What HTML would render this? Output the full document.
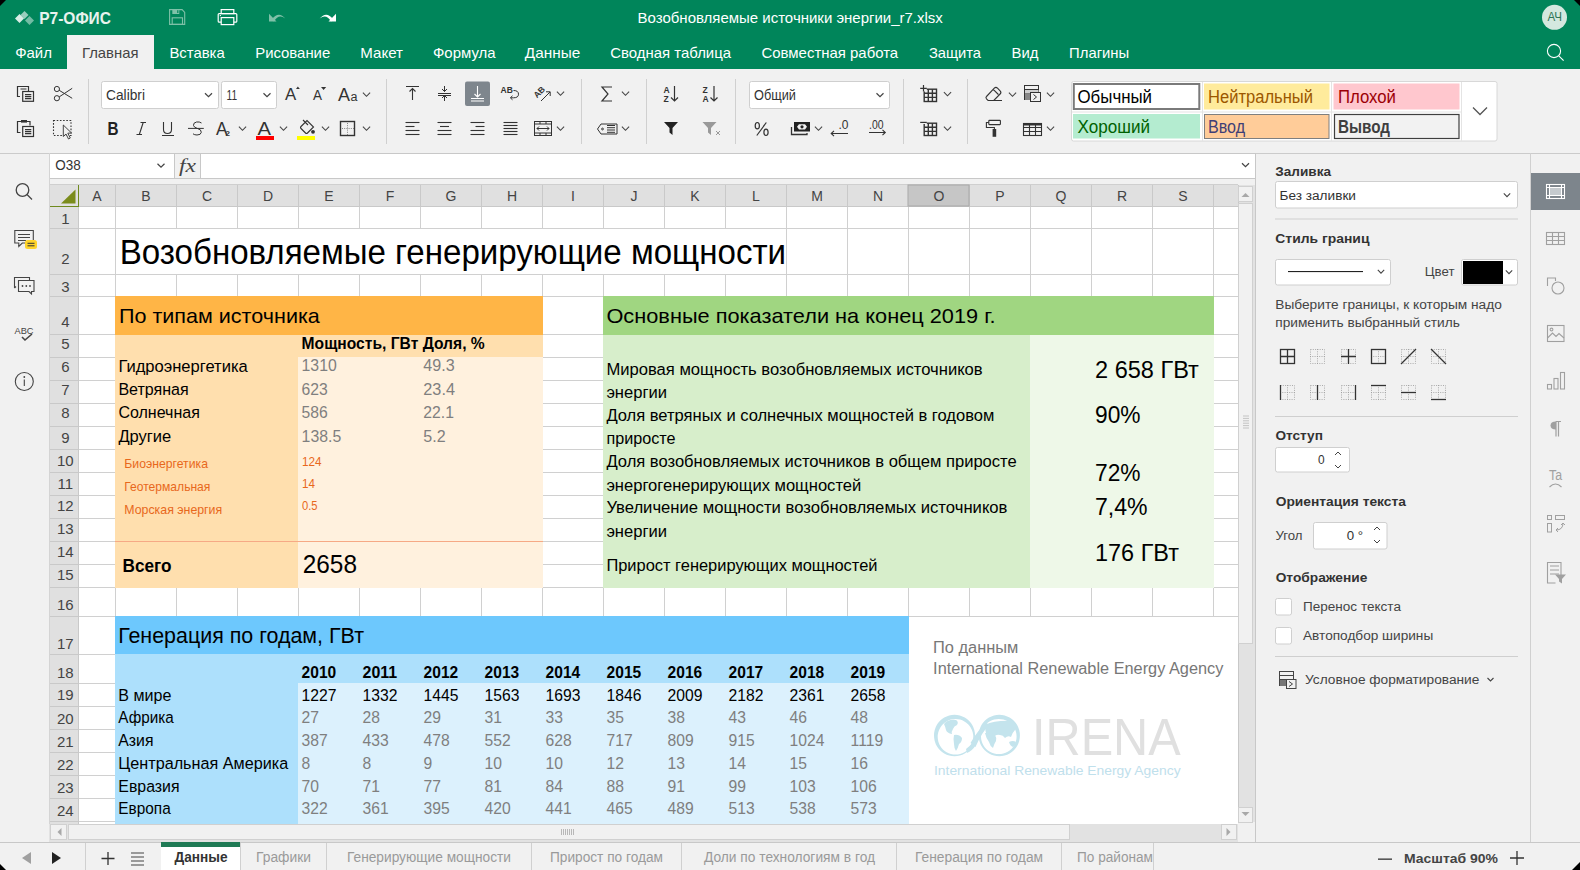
<!DOCTYPE html>
<html><head><meta charset="utf-8"><style>
html,body{margin:0;padding:0;width:1580px;height:870px;overflow:hidden;background:#f1f1f1;}
body{position:relative;font-family:"Liberation Sans",sans-serif;}
.d div{position:absolute;}
svg{position:absolute;left:0;top:0;}
svg text{font-family:"Liberation Sans",sans-serif;white-space:pre;}
</style></head><body><div class="d">
<div style="left:0px;top:0px;width:1580px;height:69px;background:#00855a;"></div>
<div style="left:67px;top:35px;width:87px;height:34px;background:#f1f1f1;"></div>
<div style="left:0px;top:69px;width:1580px;height:84px;background:#f1f1f1;"></div>
<div style="left:0px;top:153px;width:1580px;height:32px;background:#f1f1f1;"></div>
<div style="left:50px;top:185px;width:1188px;height:639px;background:#fff;"></div>
<div style="left:0px;top:842px;width:1580px;height:28px;background:#f1f1f1;"></div>
<div style="left:1256px;top:153px;width:274px;height:689px;background:#f1f1f1;"></div>
<div style="left:1531px;top:173px;width:49px;height:37px;background:#7d858c;"></div>
</div>
<svg width="1580" height="870" viewBox="0 0 1580 870">
<path d="M0 0 H6 L0 6 Z" fill="#000"/>
<path d="M1580 0 H1574 L1580 6 Z" fill="#000"/>
<path d="M1580 870 H1572 L1580 862 Z" fill="#000"/>
<path d="M0 870 H6 L0 864 Z" fill="#000"/>
<g fill="#fff"><path d="M19.5 14 l4.5 4.5 -4.5 4.5 -4.5 -4.5z" opacity="0.85"/><path d="M24.5 11 l4 4 -4 4 -4 -4z" opacity="0.6"/><path d="M29.5 16 l4.5 4.5 -4.5 4.5 -4.5 -4.5z" opacity="0.45"/></g>
<text x="39.20" y="23.7" font-size="17" fill="#e8f3ee" font-weight="bold" textLength="71.78" lengthAdjust="spacingAndGlyphs">Р7-ОФИС</text>
<g fill="none" stroke="#7fc1a8" stroke-width="1.1"><path d="M169.6 9.6 h12.5 l2.6 2.8 v12 h-15.1z"/><rect x="172.2" y="17.8" width="10.3" height="6.6"/></g><rect x="172.3" y="9.6" width="7" height="4.4" fill="#7fc1a8"/><rect x="177.2" y="10.2" width="1.2" height="2.8" fill="#00855a"/>
<g fill="none" stroke="#fff" stroke-width="1.2"><rect x="221.2" y="9.6" width="12.6" height="4"/><rect x="218.2" y="13.6" width="18.6" height="8.6" rx="1"/></g><rect x="221.2" y="17.6" width="12.6" height="7" fill="#00855a" stroke="#fff" stroke-width="1.2"/><rect x="219.8" y="15" width="1.1" height="1.1" fill="#fff"/>
<path d="M271.5 19.8 q7 -9.5 13.8 -1.2 q-6.5 -5.2 -11.3 2.8z" fill="#7fc1a8"/><path d="M269 13.8 v7.8 h7.5z" fill="#7fc1a8"/>
<path d="M333.5 19.8 q-7 -9.5 -13.8 -1.2 q6.5 -5.2 11.3 2.8z" fill="#fff"/><path d="M336 13.8 v7.8 h-7.5z" fill="#fff"/>
<text x="637.60" y="22.6" font-size="15" fill="#fff" textLength="305.21" lengthAdjust="spacingAndGlyphs">Возобновляемые источники энергии_r7.xlsx</text>
<circle cx="1554.5" cy="17.3" r="12.5" fill="#d4e8df"/>
<text x="1547.50" y="21" font-size="13" fill="#2f7456" textLength="14.52" lengthAdjust="spacingAndGlyphs">АЧ</text>
<text x="15.20" y="57.8" font-size="15" fill="#fff" textLength="36.78" lengthAdjust="spacingAndGlyphs">Файл</text>
<text x="82.00" y="57.8" font-size="15" fill="#444" textLength="56.49" lengthAdjust="spacingAndGlyphs">Главная</text>
<text x="169.40" y="57.8" font-size="15" fill="#fff" textLength="55.35" lengthAdjust="spacingAndGlyphs">Вставка</text>
<text x="255.20" y="57.8" font-size="15" fill="#fff" textLength="75.04" lengthAdjust="spacingAndGlyphs">Рисование</text>
<text x="360.30" y="57.8" font-size="15" fill="#fff" textLength="42.65" lengthAdjust="spacingAndGlyphs">Макет</text>
<text x="433.00" y="57.8" font-size="15" fill="#fff" textLength="62.63" lengthAdjust="spacingAndGlyphs">Формула</text>
<text x="524.80" y="57.8" font-size="15" fill="#fff" textLength="55.39" lengthAdjust="spacingAndGlyphs">Данные</text>
<text x="610.30" y="57.8" font-size="15" fill="#fff" textLength="120.74" lengthAdjust="spacingAndGlyphs">Сводная таблица</text>
<text x="761.50" y="57.8" font-size="15" fill="#fff" textLength="136.65" lengthAdjust="spacingAndGlyphs">Совместная работа</text>
<text x="928.90" y="57.8" font-size="15" fill="#fff" textLength="52.17" lengthAdjust="spacingAndGlyphs">Защита</text>
<text x="1011.50" y="57.8" font-size="15" fill="#fff" textLength="26.94" lengthAdjust="spacingAndGlyphs">Вид</text>
<text x="1069.10" y="57.8" font-size="15" fill="#fff" textLength="60.09" lengthAdjust="spacingAndGlyphs">Плагины</text>
<g fill="none" stroke="#fff" stroke-width="1.1"><circle cx="1554" cy="51" r="6.6"/><path d="M1558.8 55.8 l4.8 4.8"/></g>
<rect x="0" y="153" width="1580" height="1" fill="#cbcbcb"/>
<rect x="88" y="79" width="1" height="65" fill="#d0d0d0"/>
<rect x="386" y="79" width="1" height="65" fill="#d0d0d0"/>
<rect x="581" y="79" width="1" height="65" fill="#d0d0d0"/>
<rect x="646" y="79" width="1" height="65" fill="#d0d0d0"/>
<rect x="735" y="79" width="1" height="65" fill="#d0d0d0"/>
<rect x="903" y="79" width="1" height="65" fill="#d0d0d0"/>
<rect x="967" y="79" width="1" height="65" fill="#d0d0d0"/>
<rect x="101.5" y="81.5" width="117" height="27" fill="#fff" stroke="#cfcfcf" stroke-width="1" rx="2" />
<rect x="221.5" y="81.5" width="55" height="27" fill="#fff" stroke="#cfcfcf" stroke-width="1" rx="2" />
<rect x="749.5" y="81.5" width="140" height="27" fill="#fff" stroke="#cfcfcf" stroke-width="1" rx="2" />
<text x="106.00" y="100" font-size="14" fill="#333" textLength="38.98" lengthAdjust="spacingAndGlyphs">Calibri</text>
<text x="226.50" y="100" font-size="14" fill="#333" textLength="10.52" lengthAdjust="spacingAndGlyphs">11</text>
<text x="754.00" y="100" font-size="14" fill="#333" textLength="41.97" lengthAdjust="spacingAndGlyphs">Общий</text>
<path d="M205.0 93.25 l3.5 3.5 l3.5 -3.5" fill="none" stroke="#444" stroke-width="1.2"/>
<path d="M263.5 93.25 l3.5 3.5 l3.5 -3.5" fill="none" stroke="#444" stroke-width="1.2"/>
<path d="M876.5 93.25 l3.5 3.5 l3.5 -3.5" fill="none" stroke="#444" stroke-width="1.2"/>
<rect x="1071.5" y="81.5" width="425.5" height="59.5" fill="#fff" stroke="#d8d8d8" stroke-width="1" rx="2" />
<rect x="1073.8" y="84" width="125.5" height="25" fill="#fff" stroke="#7a7a7a" stroke-width="2" />
<text x="1077.50" y="102.7" font-size="17.5" fill="#000" textLength="74.55" lengthAdjust="spacingAndGlyphs">Обычный</text>
<rect x="1204" y="83.5" width="125.5" height="26" fill="#ffeb9c" />
<text x="1208.00" y="102.7" font-size="17.5" fill="#9c5700" textLength="104.97" lengthAdjust="spacingAndGlyphs">Нейтральный</text>
<rect x="1333.5" y="83.5" width="126" height="26" fill="#ffc7ce" />
<text x="1338.00" y="102.7" font-size="17.5" fill="#9c0006" textLength="57.98" lengthAdjust="spacingAndGlyphs">Плохой</text>
<rect x="1073" y="114" width="127" height="24.5" fill="#b4ecd0" />
<text x="1077.50" y="133" font-size="17.5" fill="#006100" textLength="72.46" lengthAdjust="spacingAndGlyphs">Хороший</text>
<rect x="1204.5" y="114.5" width="124.5" height="24" fill="#ffcc99" stroke="#7f7f7f" stroke-width="1" />
<text x="1208.00" y="133" font-size="17.5" fill="#3f3f76" textLength="37.03" lengthAdjust="spacingAndGlyphs">Ввод</text>
<rect x="1334.5" y="114.5" width="124.5" height="24" fill="#f2f2f2" stroke="#3f3f3f" stroke-width="1.2" />
<text x="1338.00" y="133" font-size="17.5" fill="#3f3f3f" font-weight="bold" textLength="51.98" lengthAdjust="spacingAndGlyphs">Вывод</text>
<rect x="1202" y="82" width="1" height="59" fill="#e4e4e4"/>
<rect x="1331" y="82" width="1" height="59" fill="#e4e4e4"/>
<rect x="1461" y="82" width="1" height="59" fill="#e4e4e4"/>
<rect x="1072" y="111.5" width="389" height="1" fill="#e4e4e4"/>
<path d="M1473 107.5 l7 7 l7 -7" fill="none" stroke="#555" stroke-width="1.3"/>
<g fill="none" stroke="#333" stroke-width="1.2"><path d="M20 96.5 h-2.5 v-10 h11 v4.5"/><rect x="22.7" y="91.5" width="10.8" height="9.8"/><path d="M25 94.6 h6.3 M25 96.6 h6.3 M25 98.6 h6.3 M20.5 89 h6"/></g>
<g fill="none" stroke="#333" stroke-width="1.0"><circle cx="56.9" cy="89" r="2.6"/><circle cx="56.9" cy="98.2" r="2.6"/><path d="M59.2 90.3 L72.2 98.3 M59.2 96.9 L72.2 88.3"/></g>
<g fill="none" stroke="#333" stroke-width="1.2"><path d="M20.5 132.5 h-3 v-11 h12.5 v4"/><rect x="22.7" y="126.5" width="10.8" height="10"/><path d="M25 129.6 h6.3 M25 131.6 h6.3 M25 133.6 h6.3"/></g>
<rect x="21" y="120" width="6" height="2.6" fill="#333"/>
<g fill="none" stroke="#333" stroke-width="1.1"><rect x="53.5" y="120.5" width="17.5" height="15" stroke-dasharray="1.6 1.6"/></g>
<path d="M63.3 125 L63.3 136.5 L66 134 L68.5 139 L70.3 138 L67.8 133.2 L71.5 133 Z" fill="#f1f1f1" stroke="#333" stroke-width="0.9"/>
<text x="285" y="100" font-size="17" fill="#333" style="font-weight:normal" textLength="11.2" lengthAdjust="spacingAndGlyphs">A</text><path d="M296 89 l1.9 -2.6 l1.9 2.6z" fill="#333"/>
<text x="313" y="100" font-size="15" fill="#333" textLength="9" lengthAdjust="spacingAndGlyphs">A</text><path d="M321 87 l2.6 3 l2.6 -3z" fill="#333"/>
<text x="338" y="100.5" font-size="19" fill="#333" textLength="12" lengthAdjust="spacingAndGlyphs">A</text><text x="350.5" y="100.5" font-size="12" fill="#333" textLength="7" lengthAdjust="spacingAndGlyphs">a</text>
<path d="M362.9 92.7 l3.6 3.6 l3.6 -3.6" fill="none" stroke="#444" stroke-width="1.1"/>
<text x="107.5" y="135" font-size="18" font-weight="bold" fill="#222" textLength="11" lengthAdjust="spacingAndGlyphs">B</text>
<g fill="none" stroke="#333" stroke-width="1.1"><path d="M140.5 122.5 h5.5 M136.5 134.5 h5.5 M143.2 122.5 L139.3 134.5"/></g>
<g fill="none" stroke="#333" stroke-width="1.1"><path d="M163.5 122 v7.5 q0 4 4 4 q4 0 4 -4 v-7.5 M162 135.5 h12"/></g>
<g fill="none" stroke="#333" stroke-width="1.0"><path d="M201.5 123 q-2 -1.5 -5 -1 q-3.5 0.8 -3 3.5 q0.5 2 4 3 q4 1 3.8 3.8 q-0.3 2.7 -4.3 2.7 q-2.5 0 -4 -1.2 M188 128.4 h15.8"/></g>
<text x="216" y="135" font-size="18" fill="#333" textLength="11.5" lengthAdjust="spacingAndGlyphs">A</text><text x="225.5" y="136" font-size="8" font-weight="bold" fill="#333">2</text>
<path d="M238.9 126.7 l3.6 3.6 l3.6 -3.6" fill="none" stroke="#444" stroke-width="1.1"/>
<text x="257.5" y="135" font-size="18" fill="#333" textLength="13.5" lengthAdjust="spacingAndGlyphs">A</text><rect x="256" y="136" width="18" height="4" fill="#f00"/>
<path d="M279.9 126.7 l3.6 3.6 l3.6 -3.6" fill="none" stroke="#444" stroke-width="1.1"/>
<g fill="none" stroke="#333" stroke-width="1.1"><path d="M301 126.5 l6 -6 l6.5 6.5 l-6 6 q-1 1 -2 0 l-4.5 -4.5 q-1 -1 0 -2z M303 120 l5 5"/></g>
<circle cx="313" cy="131.8" r="1.9" fill="#333"/><rect x="297" y="136" width="18" height="4" fill="#ff0"/>
<path d="M321.9 126.7 l3.6 3.6 l3.6 -3.6" fill="none" stroke="#444" stroke-width="1.1"/>
<g fill="none" stroke="#333" stroke-width="1.4"><rect x="340.5" y="121.5" width="14" height="14"/></g>
<g fill="none" stroke="#777" stroke-dasharray="1 1.2" stroke-width="0.9"><path d="M347.5 123 v12 M342 128.5 h12"/></g>
<path d="M362.9 126.7 l3.6 3.6 l3.6 -3.6" fill="none" stroke="#444" stroke-width="1.1"/>
<g fill="none" stroke="#333" stroke-width="1.1"><path d="M406 86.5 h13 M412.5 100 v-11 M409.5 91.5 l3 -3 l3 3"/></g>
<g fill="none" stroke="#333" stroke-width="1.0"><path d="M438 93.5 h13 M444.5 86 v5.5 M442 89 l2.5 2.5 l2.5 -2.5 M444.5 101 v-5.5 M442 98 l2.5 -2.5 l2.5 2.5 M438 95.5 h13"/></g>
<rect x="465" y="81.5" width="25" height="24.5" fill="#7e868d" rx="2" />
<g fill="none" stroke="#fff" stroke-width="1.1"><path d="M471 98.5 h13 M471 101 h13 M477.5 86 v11 M474.5 94 l3 3 l3 -3"/></g>
<text x="500.5" y="93" font-size="8.5" font-weight="bold" fill="#333">AB</text>
<g fill="none" stroke="#333" stroke-width="1.0"><path d="M513.5 90.5 q5 0 5 3.7 q0 3.6 -5 3.6 h-2.5 M512.5 95.8 l-2.2 2 l2.2 2"/></g>
<text x="537" y="98.5" font-size="8.5" font-weight="bold" fill="#333" transform="rotate(-45 537 98.5)">AB</text>
<g fill="none" stroke="#333" stroke-width="1.0"><path d="M541 101 l9 -9 M546 91.8 h4.2 v4.2"/></g>
<path d="M556.9 91.7 l3.6 3.6 l3.6 -3.6" fill="none" stroke="#444" stroke-width="1.1"/>
<g fill="none" stroke="#333" stroke-width="1.1"><path d="M405.5 122.5 h14"/><path d="M405.5 126.5 h9"/><path d="M405.5 130.5 h14"/><path d="M405.5 134.5 h14"/></g>
<g fill="none" stroke="#333" stroke-width="1.1"><path d="M437.5 122.5 h14"/><path d="M440 126.5 h9"/><path d="M437.5 130.5 h14"/><path d="M437.5 134.5 h14"/></g>
<g fill="none" stroke="#333" stroke-width="1.1"><path d="M470.5 122.5 h14"/><path d="M475.5 126.5 h9"/><path d="M470.5 130.5 h14"/><path d="M470.5 134.5 h14"/></g>
<g fill="none" stroke="#333" stroke-width="1.1"><path d="M503.5 122.5 h14"/><path d="M503.5 125.5 h14"/><path d="M503.5 128.5 h14"/><path d="M503.5 131.5 h14"/></g>
<g fill="none" stroke="#333" stroke-width="1.1"><path d="M503.5 134.5 h14"/></g>
<g fill="none" stroke="#333" stroke-width="1.0"><rect x="534.5" y="121.5" width="17" height="14"/><path d="M534.5 124 h17 M534.5 133 h17 M537 128.5 h12 M539 126.5 l-2 2 l2 2 M547 126.5 l2 2 l-2 2 M540 122 v2 M546 122 v2 M540 133 v2 M546 133 v2"/></g>
<path d="M556.9 126.7 l3.6 3.6 l3.6 -3.6" fill="none" stroke="#444" stroke-width="1.1"/>
<g fill="none" stroke="#333" stroke-width="1.2"><path d="M612 87 h-10 l6 7 l-6 7 h10"/></g>
<path d="M621.9 91.7 l3.6 3.6 l3.6 -3.6" fill="none" stroke="#444" stroke-width="1.1"/>
<g fill="none" stroke="#333" stroke-width="1.0"><path d="M601 124 h16 v10 h-16 l-3.5 -5z"/><circle cx="602.5" cy="129" r="0.9"/><path d="M607 125.5 h8 M607 127.7 h8 M607 130 h8 M607 132.3 h8"/></g>
<path d="M621.9 126.7 l3.6 3.6 l3.6 -3.6" fill="none" stroke="#444" stroke-width="1.1"/>
<text x="663.5" y="92.5" font-size="8.5" font-weight="bold" fill="#333">A</text><text x="663.5" y="102" font-size="8.5" font-weight="bold" fill="#333">Z</text>
<g fill="none" stroke="#333" stroke-width="1.2"><path d="M674.5 86 v15 M671 97.5 l3.5 3.5 l3.5 -3.5"/></g>
<text x="702.5" y="92.5" font-size="8.5" font-weight="bold" fill="#333">Z</text><text x="702.5" y="102" font-size="8.5" font-weight="bold" fill="#333">A</text>
<g fill="none" stroke="#333" stroke-width="1.2"><path d="M714 86 v15 M710.5 97.5 l3.5 3.5 l3.5 -3.5"/></g>
<path d="M664 122 h14 l-5.5 6 v7 l-3 -2.5 v-4.5z" fill="#222"/>
<path d="M702.5 122 h14 l-5.5 6 v7 l-3 -2.5 v-4.5z" fill="#999"/>
<g fill="none" stroke="#999" stroke-width="1.0"><path d="M716 131 l4 4 M720 131 l-4 4"/></g>
<g fill="none" stroke="#333" stroke-width="1.2"><ellipse cx="757.3" cy="125.7" rx="2.1" ry="3.2"/><ellipse cx="766" cy="132.3" rx="2.1" ry="3.2"/><path d="M756.8 135.5 L766.3 122.5"/></g>
<g fill="none" stroke="#333" stroke-width="1.3"><path d="M791.5 127 v7.5 h15.5 v-1.5"/></g>
<rect x="794" y="122" width="16" height="9.5" fill="#222"/><path d="M797 126.8 l2 -2.6 h6 l2 2.6 l-2 2.6 h-6z" fill="#f1f1f1"/><circle cx="802" cy="126.8" r="1.6" fill="#222"/>
<path d="M814.9 126.7 l3.6 3.6 l3.6 -3.6" fill="none" stroke="#444" stroke-width="1.1"/>
<text x="838.5" y="129" font-size="12.5" fill="#333" textLength="10" lengthAdjust="spacingAndGlyphs">.0</text>
<g fill="none" stroke="#333" stroke-width="1.1"><path d="M831 133.5 h17 M834 130.8 l-2.8 2.7 l2.8 2.7"/></g>
<text x="869" y="129" font-size="12.5" fill="#333" textLength="14.5" lengthAdjust="spacingAndGlyphs">.00</text>
<g fill="none" stroke="#333" stroke-width="1.1"><path d="M869 132.5 h16.5 M882.5 129.8 l2.8 2.7 l-2.8 2.7"/></g>
<g fill="none" stroke="#333" stroke-width="1.4"><rect x="924.2" y="89.2" width="12.3" height="12.3"/><path d="M924.2 93.3 h12.3 M924.2 97.4 h12.3 M928.3 89.2 v12.3 M932.4 89.2 v12.3"/></g>
<g fill="none" stroke="#f1f1f1" stroke-width="3.2"><path d="M923.5 85 v6.6 M920.2 88.3 h6.6"/></g>
<g fill="none" stroke="#333" stroke-width="1.2"><path d="M923.5 85 v6.6 M920.2 88.3 h6.6"/></g>
<path d="M943.9 92.2 l3.6 3.6 l3.6 -3.6" fill="none" stroke="#444" stroke-width="1.1"/>
<g fill="none" stroke="#333" stroke-width="1.4"><rect x="924.2" y="123.2" width="12.3" height="12.3"/><path d="M924.2 127.3 h12.3 M924.2 131.4 h12.3 M928.3 123.2 v12.3 M932.4 123.2 v12.3"/></g>
<g fill="none" stroke="#f1f1f1" stroke-width="3.2"><path d="M920.2 122.4 h6.6"/></g>
<g fill="none" stroke="#333" stroke-width="1.2"><path d="M920.2 122.4 h6.6"/></g>
<path d="M943.9 126.7 l3.6 3.6 l3.6 -3.6" fill="none" stroke="#444" stroke-width="1.1"/>
<g fill="none" stroke="#333" stroke-width="1.1"><path d="M994 100.5 h8 M986.5 96.5 l7.8 -8.3 q1.6 -1.6 3.2 0 l2.6 2.6 q1.6 1.6 0 3.2 l-6.3 6.5 h-5.7 l-1.6 -1.6 q-1.1 -1.3 0 -2.4z M993.2 89.3 l5.2 5.2"/></g>
<path d="M1008.9 92.7 l3.6 3.6 l3.6 -3.6" fill="none" stroke="#444" stroke-width="1.1"/>
<g fill="none" stroke="#333" stroke-width="1.0"><rect x="1024.5" y="85.5" width="14" height="14"/><path d="M1024.5 89.5 h14 M1024.5 93.5 h7"/></g>
<rect x="1025" y="90" width="13.5" height="3.5" fill="#cfcfcf"/><rect x="1025" y="94" width="6.5" height="6" fill="#888"/>
<g fill="none" stroke="#333" stroke-width="1.0"><rect x="1030.5" y="92.5" width="10" height="9" fill="#f1f1f1"/><path d="M1033.5 94.5 l3 2.5 l-3 2.5"/></g>
<path d="M1046.9 92.7 l3.6 3.6 l3.6 -3.6" fill="none" stroke="#444" stroke-width="1.1"/>
<g fill="none" stroke="#333" stroke-width="1.1"><rect x="988.8" y="120.4" width="11.6" height="4.2" rx="0.6"/><path d="M988.8 122.5 h-2.4 v5 h8 v1.8"/></g>
<rect x="992.6" y="129" width="3.6" height="7.8" fill="#333"/>
<g fill="none" stroke="#333" stroke-width="1.1"><rect x="1023.5" y="123.5" width="18" height="12"/><path d="M1023.5 127.5 h18 M1023.5 131.5 h18 M1029.5 123.5 v12 M1035.5 123.5 v12"/></g>
<rect x="1023" y="123" width="19" height="2.5" fill="#333"/>
<path d="M1046.9 126.7 l3.6 3.6 l3.6 -3.6" fill="none" stroke="#444" stroke-width="1.1"/>
<rect x="50" y="153.5" width="1205" height="25" fill="#fff" />
<rect x="50" y="153" width="1206" height="1" fill="#c8c8c8"/>
<rect x="50" y="178" width="1206" height="1" fill="#c8c8c8"/>
<rect x="174" y="154" width="1" height="24" fill="#c8c8c8"/>
<rect x="200" y="154" width="1" height="24" fill="#c8c8c8"/>
<rect x="175" y="154" width="25" height="24" fill="#f1f1f1" />
<text x="55.30" y="170" font-size="14" fill="#333" textLength="25.46" lengthAdjust="spacingAndGlyphs">O38</text>
<path d="M157.5 163.75 l3.5 3.5 l3.5 -3.5" fill="none" stroke="#444" stroke-width="1.2"/>
<text x="179" y="171.5" style="font-family:'Liberation Serif';font-style:italic" font-size="18" fill="#444" textLength="17" lengthAdjust="spacingAndGlyphs">fx</text>
<path d="M1242.0 163.25 l3.5 3.5 l3.5 -3.5" fill="none" stroke="#444" stroke-width="1.2"/>
<rect x="1255" y="153" width="1" height="689" fill="#c8c8c8"/>
<rect x="49" y="153" width="1" height="689" fill="#d4d4d4"/>
<rect x="50" y="185" width="1188" height="21" fill="#e0e0e0" />
<rect x="50" y="206" width="28" height="618" fill="#e0e0e0" />
<rect x="908" y="185" width="61" height="21" fill="#c6c6c6" />
<rect x="78" y="185" width="1" height="639" fill="#d0d0d0"/>
<rect x="115" y="185" width="1" height="639" fill="#d0d0d0"/>
<rect x="176" y="185" width="1" height="639" fill="#d0d0d0"/>
<rect x="237" y="185" width="1" height="639" fill="#d0d0d0"/>
<rect x="298" y="185" width="1" height="639" fill="#d0d0d0"/>
<rect x="359" y="185" width="1" height="639" fill="#d0d0d0"/>
<rect x="420" y="185" width="1" height="639" fill="#d0d0d0"/>
<rect x="481" y="185" width="1" height="639" fill="#d0d0d0"/>
<rect x="542" y="185" width="1" height="639" fill="#d0d0d0"/>
<rect x="603" y="185" width="1" height="639" fill="#d0d0d0"/>
<rect x="664" y="185" width="1" height="639" fill="#d0d0d0"/>
<rect x="725" y="185" width="1" height="639" fill="#d0d0d0"/>
<rect x="786" y="185" width="1" height="639" fill="#d0d0d0"/>
<rect x="847" y="185" width="1" height="639" fill="#d0d0d0"/>
<rect x="908" y="185" width="1" height="639" fill="#d0d0d0"/>
<rect x="969" y="185" width="1" height="639" fill="#d0d0d0"/>
<rect x="1030" y="185" width="1" height="639" fill="#d0d0d0"/>
<rect x="1091" y="185" width="1" height="639" fill="#d0d0d0"/>
<rect x="1152" y="185" width="1" height="639" fill="#d0d0d0"/>
<rect x="1213" y="185" width="1" height="639" fill="#d0d0d0"/>
<rect x="50" y="206" width="1188" height="1" fill="#d0d0d0"/>
<rect x="50" y="228" width="1188" height="1" fill="#d0d0d0"/>
<rect x="50" y="274" width="1188" height="1" fill="#d0d0d0"/>
<rect x="50" y="296" width="1188" height="1" fill="#d0d0d0"/>
<rect x="50" y="334" width="1188" height="1" fill="#d0d0d0"/>
<rect x="50" y="357" width="1188" height="1" fill="#d0d0d0"/>
<rect x="50" y="380" width="1188" height="1" fill="#d0d0d0"/>
<rect x="50" y="403" width="1188" height="1" fill="#d0d0d0"/>
<rect x="50" y="426" width="1188" height="1" fill="#d0d0d0"/>
<rect x="50" y="449" width="1188" height="1" fill="#d0d0d0"/>
<rect x="50" y="472" width="1188" height="1" fill="#d0d0d0"/>
<rect x="50" y="495" width="1188" height="1" fill="#d0d0d0"/>
<rect x="50" y="518" width="1188" height="1" fill="#d0d0d0"/>
<rect x="50" y="541" width="1188" height="1" fill="#d0d0d0"/>
<rect x="50" y="564" width="1188" height="1" fill="#d0d0d0"/>
<rect x="50" y="587" width="1188" height="1" fill="#d0d0d0"/>
<rect x="50" y="616" width="1188" height="1" fill="#d0d0d0"/>
<rect x="50" y="654" width="1188" height="1" fill="#d0d0d0"/>
<rect x="50" y="683" width="1188" height="1" fill="#d0d0d0"/>
<rect x="50" y="706" width="1188" height="1" fill="#d0d0d0"/>
<rect x="50" y="729" width="1188" height="1" fill="#d0d0d0"/>
<rect x="50" y="752" width="1188" height="1" fill="#d0d0d0"/>
<rect x="50" y="775" width="1188" height="1" fill="#d0d0d0"/>
<rect x="50" y="798" width="1188" height="1" fill="#d0d0d0"/>
<rect x="50" y="821" width="1188" height="1" fill="#d0d0d0"/>
<rect x="50" y="184" width="1188" height="1" fill="#cfcfcf"/>
<rect x="78" y="185" width="1" height="21" fill="#c9c9c9"/>
<rect x="115" y="185" width="1" height="21" fill="#c9c9c9"/>
<rect x="176" y="185" width="1" height="21" fill="#c9c9c9"/>
<rect x="237" y="185" width="1" height="21" fill="#c9c9c9"/>
<rect x="298" y="185" width="1" height="21" fill="#c9c9c9"/>
<rect x="359" y="185" width="1" height="21" fill="#c9c9c9"/>
<rect x="420" y="185" width="1" height="21" fill="#c9c9c9"/>
<rect x="481" y="185" width="1" height="21" fill="#c9c9c9"/>
<rect x="542" y="185" width="1" height="21" fill="#c9c9c9"/>
<rect x="603" y="185" width="1" height="21" fill="#c9c9c9"/>
<rect x="664" y="185" width="1" height="21" fill="#c9c9c9"/>
<rect x="725" y="185" width="1" height="21" fill="#c9c9c9"/>
<rect x="786" y="185" width="1" height="21" fill="#c9c9c9"/>
<rect x="847" y="185" width="1" height="21" fill="#c9c9c9"/>
<rect x="908" y="185" width="1" height="21" fill="#c9c9c9"/>
<rect x="969" y="185" width="1" height="21" fill="#c9c9c9"/>
<rect x="1030" y="185" width="1" height="21" fill="#c9c9c9"/>
<rect x="1091" y="185" width="1" height="21" fill="#c9c9c9"/>
<rect x="1152" y="185" width="1" height="21" fill="#c9c9c9"/>
<rect x="1213" y="185" width="1" height="21" fill="#c9c9c9"/>
<rect x="50" y="206" width="28" height="1" fill="#c9c9c9"/>
<rect x="50" y="228" width="28" height="1" fill="#c9c9c9"/>
<rect x="50" y="274" width="28" height="1" fill="#c9c9c9"/>
<rect x="50" y="296" width="28" height="1" fill="#c9c9c9"/>
<rect x="50" y="334" width="28" height="1" fill="#c9c9c9"/>
<rect x="50" y="357" width="28" height="1" fill="#c9c9c9"/>
<rect x="50" y="380" width="28" height="1" fill="#c9c9c9"/>
<rect x="50" y="403" width="28" height="1" fill="#c9c9c9"/>
<rect x="50" y="426" width="28" height="1" fill="#c9c9c9"/>
<rect x="50" y="449" width="28" height="1" fill="#c9c9c9"/>
<rect x="50" y="472" width="28" height="1" fill="#c9c9c9"/>
<rect x="50" y="495" width="28" height="1" fill="#c9c9c9"/>
<rect x="50" y="518" width="28" height="1" fill="#c9c9c9"/>
<rect x="50" y="541" width="28" height="1" fill="#c9c9c9"/>
<rect x="50" y="564" width="28" height="1" fill="#c9c9c9"/>
<rect x="50" y="587" width="28" height="1" fill="#c9c9c9"/>
<rect x="50" y="616" width="28" height="1" fill="#c9c9c9"/>
<rect x="50" y="654" width="28" height="1" fill="#c9c9c9"/>
<rect x="50" y="683" width="28" height="1" fill="#c9c9c9"/>
<rect x="50" y="706" width="28" height="1" fill="#c9c9c9"/>
<rect x="50" y="729" width="28" height="1" fill="#c9c9c9"/>
<rect x="50" y="752" width="28" height="1" fill="#c9c9c9"/>
<rect x="50" y="775" width="28" height="1" fill="#c9c9c9"/>
<rect x="50" y="798" width="28" height="1" fill="#c9c9c9"/>
<rect x="50" y="821" width="28" height="1" fill="#c9c9c9"/>
<rect x="78" y="206" width="1160" height="1" fill="#c9c9c9"/>
<rect x="78" y="185" width="1" height="639" fill="#c9c9c9"/>
<rect x="908" y="185" width="61" height="21" fill="none" stroke="#a8a8a8" stroke-width="1" />
<path d="M61 203.5 L75.5 189.5 L75.5 203.5 Z" fill="#7b8c1c"/>
<rect x="50" y="206" width="29" height="1" fill="#6f8a1e"/>
<rect x="78" y="185" width="1" height="22" fill="#6f8a1e"/>
<text x="97.0" y="201" font-size="14" fill="#444" text-anchor="middle">A</text>
<text x="146.0" y="201" font-size="14" fill="#444" text-anchor="middle">B</text>
<text x="207.0" y="201" font-size="14" fill="#444" text-anchor="middle">C</text>
<text x="268.0" y="201" font-size="14" fill="#444" text-anchor="middle">D</text>
<text x="329.0" y="201" font-size="14" fill="#444" text-anchor="middle">E</text>
<text x="390.0" y="201" font-size="14" fill="#444" text-anchor="middle">F</text>
<text x="451.0" y="201" font-size="14" fill="#444" text-anchor="middle">G</text>
<text x="512.0" y="201" font-size="14" fill="#444" text-anchor="middle">H</text>
<text x="573.0" y="201" font-size="14" fill="#444" text-anchor="middle">I</text>
<text x="634.0" y="201" font-size="14" fill="#444" text-anchor="middle">J</text>
<text x="695.0" y="201" font-size="14" fill="#444" text-anchor="middle">K</text>
<text x="756.0" y="201" font-size="14" fill="#444" text-anchor="middle">L</text>
<text x="817.0" y="201" font-size="14" fill="#444" text-anchor="middle">M</text>
<text x="878.0" y="201" font-size="14" fill="#444" text-anchor="middle">N</text>
<text x="939.0" y="201" font-size="14" fill="#444" text-anchor="middle">O</text>
<text x="1000.0" y="201" font-size="14" fill="#444" text-anchor="middle">P</text>
<text x="1061.0" y="201" font-size="14" fill="#444" text-anchor="middle">Q</text>
<text x="1122.0" y="201" font-size="14" fill="#444" text-anchor="middle">R</text>
<text x="1183.0" y="201" font-size="14" fill="#444" text-anchor="middle">S</text>
<text x="65.3" y="224.0" font-size="15" fill="#444" text-anchor="middle">1</text>
<text x="65.3" y="264.0" font-size="15" fill="#444" text-anchor="middle">2</text>
<text x="65.3" y="292.0" font-size="15" fill="#444" text-anchor="middle">3</text>
<text x="65.3" y="327.2" font-size="15" fill="#444" text-anchor="middle">4</text>
<text x="65.3" y="348.9" font-size="15" fill="#444" text-anchor="middle">5</text>
<text x="65.3" y="371.9" font-size="15" fill="#444" text-anchor="middle">6</text>
<text x="65.3" y="395.1" font-size="15" fill="#444" text-anchor="middle">7</text>
<text x="65.3" y="418.2" font-size="15" fill="#444" text-anchor="middle">8</text>
<text x="65.3" y="442.9" font-size="15" fill="#444" text-anchor="middle">9</text>
<text x="65.3" y="466.1" font-size="15" fill="#444" text-anchor="middle">10</text>
<text x="65.3" y="489.2" font-size="15" fill="#444" text-anchor="middle">11</text>
<text x="65.3" y="511.0" font-size="15" fill="#444" text-anchor="middle">12</text>
<text x="65.3" y="534.0" font-size="15" fill="#444" text-anchor="middle">13</text>
<text x="65.3" y="556.7" font-size="15" fill="#444" text-anchor="middle">14</text>
<text x="65.3" y="580.1" font-size="15" fill="#444" text-anchor="middle">15</text>
<text x="65.3" y="609.8" font-size="15" fill="#444" text-anchor="middle">16</text>
<text x="65.3" y="649.1" font-size="15" fill="#444" text-anchor="middle">17</text>
<text x="65.3" y="678.1" font-size="15" fill="#444" text-anchor="middle">18</text>
<text x="65.3" y="699.8" font-size="15" fill="#444" text-anchor="middle">19</text>
<text x="65.3" y="724.1" font-size="15" fill="#444" text-anchor="middle">20</text>
<text x="65.3" y="746.5" font-size="15" fill="#444" text-anchor="middle">21</text>
<text x="65.3" y="769.6" font-size="15" fill="#444" text-anchor="middle">22</text>
<text x="65.3" y="792.6" font-size="15" fill="#444" text-anchor="middle">23</text>
<text x="65.3" y="815.5" font-size="15" fill="#444" text-anchor="middle">24</text>
<rect x="116" y="229" width="669" height="45" fill="#fff" />
<rect x="115" y="296" width="428" height="39" fill="#ffb546" />
<rect x="115" y="335" width="428" height="23" fill="#ffdfae" />
<rect x="115" y="357" width="183" height="231" fill="#ffdfae" />
<rect x="298" y="357" width="245" height="231" fill="#fff1de" />
<rect x="115" y="541" width="428" height="1" fill="#f6a985"/>
<rect x="603" y="296" width="611" height="39" fill="#a0d681" />
<rect x="603" y="335" width="427" height="253" fill="#d7eecb" />
<rect x="1030" y="335" width="184" height="253" fill="#eef8e8" />
<rect x="115" y="616" width="794" height="39" fill="#6dc8fd" />
<rect x="115" y="654" width="794" height="30" fill="#ade0fc" />
<rect x="115" y="683" width="183" height="141" fill="#ade0fc" />
<rect x="298" y="683" width="611" height="141" fill="#dcf1fd" />
<rect x="909" y="617" width="329" height="207" fill="#fff" />
<text x="119.70" y="264.2" font-size="35" fill="#000" textLength="666.35" lengthAdjust="spacingAndGlyphs">Возобновляемые генерирующие мощности</text>
<text x="119.00" y="322.9" font-size="21" fill="#000" textLength="200.81" lengthAdjust="spacingAndGlyphs">По типам источника</text>
<text x="301.60" y="348.6" font-size="16.5" fill="#000" font-weight="bold" textLength="183.13" lengthAdjust="spacingAndGlyphs">Мощность, ГВт Доля, %</text>
<text x="118.40" y="371.5" font-size="16.7" fill="#000" textLength="129.37" lengthAdjust="spacingAndGlyphs">Гидроэнергетика</text>
<text x="118.40" y="394.7" font-size="16.7" fill="#000" textLength="70.32" lengthAdjust="spacingAndGlyphs">Ветряная</text>
<text x="118.40" y="417.7" font-size="16.7" fill="#000" textLength="81.43" lengthAdjust="spacingAndGlyphs">Солнечная</text>
<text x="118.40" y="442.4" font-size="16.7" fill="#000" textLength="52.87" lengthAdjust="spacingAndGlyphs">Другие</text>
<text x="301.60" y="371.4" font-size="15.7" fill="#7f7f7f" textLength="35.13" lengthAdjust="spacingAndGlyphs">1310</text>
<text x="301.60" y="394.6" font-size="15.7" fill="#7f7f7f" textLength="26.19" lengthAdjust="spacingAndGlyphs">623</text>
<text x="301.60" y="417.6" font-size="15.7" fill="#7f7f7f" textLength="26.19" lengthAdjust="spacingAndGlyphs">586</text>
<text x="301.60" y="442.4" font-size="15.7" fill="#7f7f7f" textLength="39.59" lengthAdjust="spacingAndGlyphs">138.5</text>
<text x="423.30" y="371.4" font-size="15.7" fill="#7f7f7f" textLength="31.36" lengthAdjust="spacingAndGlyphs">49.3</text>
<text x="423.30" y="394.6" font-size="15.7" fill="#7f7f7f" textLength="31.65" lengthAdjust="spacingAndGlyphs">23.4</text>
<text x="423.30" y="417.6" font-size="15.7" fill="#7f7f7f" textLength="30.66" lengthAdjust="spacingAndGlyphs">22.1</text>
<text x="423.30" y="442.4" font-size="15.7" fill="#7f7f7f" textLength="22.33" lengthAdjust="spacingAndGlyphs">5.2</text>
<text x="124.30" y="467.8" font-size="13" fill="#e8681c" textLength="83.67" lengthAdjust="spacingAndGlyphs">Биоэнергетика</text>
<text x="124.30" y="491" font-size="13" fill="#e8681c" textLength="86.09" lengthAdjust="spacingAndGlyphs">Геотермальная</text>
<text x="124.30" y="513.6" font-size="13" fill="#e8681c" textLength="97.90" lengthAdjust="spacingAndGlyphs">Морская энергия</text>
<text x="302.00" y="465.5" font-size="12.5" fill="#e8681c" textLength="19.56" lengthAdjust="spacingAndGlyphs">124</text>
<text x="302.00" y="488.3" font-size="12.5" fill="#e8681c" textLength="13.00" lengthAdjust="spacingAndGlyphs">14</text>
<text x="302.00" y="509.5" font-size="12.5" fill="#e8681c" textLength="15.58" lengthAdjust="spacingAndGlyphs">0.5</text>
<text x="122.50" y="571.5" font-size="18" fill="#000" font-weight="bold" textLength="48.98" lengthAdjust="spacingAndGlyphs">Всего</text>
<text x="302.80" y="572.7" font-size="26.5" fill="#000" textLength="54.15" lengthAdjust="spacingAndGlyphs">2658</text>
<text x="606.40" y="323.1" font-size="21" fill="#000" textLength="389.18" lengthAdjust="spacingAndGlyphs">Основные показатели на конец 2019 г.</text>
<text x="606.40" y="375" font-size="16" fill="#000" textLength="376.29" lengthAdjust="spacingAndGlyphs">Мировая мощность возобновляемых источников</text>
<text x="606.40" y="397.6" font-size="16" fill="#000" textLength="60.61" lengthAdjust="spacingAndGlyphs">энергии</text>
<text x="606.40" y="421" font-size="16" fill="#000" textLength="387.91" lengthAdjust="spacingAndGlyphs">Доля ветряных и солнечных мощностей в годовом</text>
<text x="606.40" y="443.6" font-size="16" fill="#000" textLength="69.04" lengthAdjust="spacingAndGlyphs">приросте</text>
<text x="606.40" y="467.2" font-size="16" fill="#000" textLength="410.32" lengthAdjust="spacingAndGlyphs">Доля возобновляемых источников в общем приросте</text>
<text x="606.40" y="490.6" font-size="16" fill="#000" textLength="254.88" lengthAdjust="spacingAndGlyphs">энергогенерирующих мощностей</text>
<text x="606.40" y="512.6" font-size="16" fill="#000" textLength="401.07" lengthAdjust="spacingAndGlyphs">Увеличение мощности возобновляемых источников</text>
<text x="606.40" y="536.6" font-size="16" fill="#000" textLength="60.61" lengthAdjust="spacingAndGlyphs">энергии</text>
<text x="606.40" y="570.6" font-size="16" fill="#000" textLength="271.11" lengthAdjust="spacingAndGlyphs">Прирост генерирующих мощностей</text>
<text x="1095.00" y="377.5" font-size="24.6" fill="#000" textLength="103.87" lengthAdjust="spacingAndGlyphs">2 658 ГВт</text>
<text x="1095.00" y="423.2" font-size="24.6" fill="#000" textLength="45.53" lengthAdjust="spacingAndGlyphs">90%</text>
<text x="1095.00" y="480.6" font-size="24.6" fill="#000" textLength="45.53" lengthAdjust="spacingAndGlyphs">72%</text>
<text x="1095.00" y="515.4" font-size="24.6" fill="#000" textLength="52.57" lengthAdjust="spacingAndGlyphs">7,4%</text>
<text x="1095.00" y="561.4" font-size="24.6" fill="#000" textLength="83.96" lengthAdjust="spacingAndGlyphs">176 ГВт</text>
<text x="118.30" y="642.9" font-size="22" fill="#000" textLength="245.66" lengthAdjust="spacingAndGlyphs">Генерация по годам, ГВт</text>
<text x="118.30" y="700.5" font-size="16.7" fill="#000" textLength="53.06" lengthAdjust="spacingAndGlyphs">В мире</text>
<text x="118.30" y="723.2" font-size="16.7" fill="#000" textLength="55.35" lengthAdjust="spacingAndGlyphs">Африка</text>
<text x="118.30" y="746" font-size="16.7" fill="#000" textLength="35.17" lengthAdjust="spacingAndGlyphs">Азия</text>
<text x="118.30" y="769.3" font-size="16.7" fill="#000" textLength="169.91" lengthAdjust="spacingAndGlyphs">Центральная Америка</text>
<text x="118.30" y="791.5" font-size="16.7" fill="#000" textLength="61.23" lengthAdjust="spacingAndGlyphs">Евразия</text>
<text x="118.30" y="814.2" font-size="16.7" fill="#000" textLength="52.42" lengthAdjust="spacingAndGlyphs">Европа</text>
<text x="301.60" y="677.7" font-size="16.5" fill="#000" font-weight="bold" textLength="34.61" lengthAdjust="spacingAndGlyphs">2010</text>
<text x="301.60" y="700.5" font-size="15.7" fill="#000" textLength="34.92" lengthAdjust="spacingAndGlyphs">1227</text>
<text x="301.60" y="723.2" font-size="15.7" fill="#7f7f7f" textLength="17.46" lengthAdjust="spacingAndGlyphs">27</text>
<text x="301.60" y="746" font-size="15.7" fill="#7f7f7f" textLength="26.19" lengthAdjust="spacingAndGlyphs">387</text>
<text x="301.60" y="769.3" font-size="15.7" fill="#7f7f7f" textLength="8.73" lengthAdjust="spacingAndGlyphs">8</text>
<text x="301.60" y="791.5" font-size="15.7" fill="#7f7f7f" textLength="17.46" lengthAdjust="spacingAndGlyphs">70</text>
<text x="301.60" y="814.2" font-size="15.7" fill="#7f7f7f" textLength="26.19" lengthAdjust="spacingAndGlyphs">322</text>
<text x="362.60" y="677.7" font-size="16.5" fill="#000" font-weight="bold" textLength="34.60" lengthAdjust="spacingAndGlyphs">2011</text>
<text x="362.60" y="700.5" font-size="15.7" fill="#000" textLength="34.92" lengthAdjust="spacingAndGlyphs">1332</text>
<text x="362.60" y="723.2" font-size="15.7" fill="#7f7f7f" textLength="17.46" lengthAdjust="spacingAndGlyphs">28</text>
<text x="362.60" y="746" font-size="15.7" fill="#7f7f7f" textLength="26.19" lengthAdjust="spacingAndGlyphs">433</text>
<text x="362.60" y="769.3" font-size="15.7" fill="#7f7f7f" textLength="8.73" lengthAdjust="spacingAndGlyphs">8</text>
<text x="362.60" y="791.5" font-size="15.7" fill="#7f7f7f" textLength="17.46" lengthAdjust="spacingAndGlyphs">71</text>
<text x="362.60" y="814.2" font-size="15.7" fill="#7f7f7f" textLength="26.19" lengthAdjust="spacingAndGlyphs">361</text>
<text x="423.60" y="677.7" font-size="16.5" fill="#000" font-weight="bold" textLength="34.61" lengthAdjust="spacingAndGlyphs">2012</text>
<text x="423.60" y="700.5" font-size="15.7" fill="#000" textLength="34.92" lengthAdjust="spacingAndGlyphs">1445</text>
<text x="423.60" y="723.2" font-size="15.7" fill="#7f7f7f" textLength="17.46" lengthAdjust="spacingAndGlyphs">29</text>
<text x="423.60" y="746" font-size="15.7" fill="#7f7f7f" textLength="26.19" lengthAdjust="spacingAndGlyphs">478</text>
<text x="423.60" y="769.3" font-size="15.7" fill="#7f7f7f" textLength="8.73" lengthAdjust="spacingAndGlyphs">9</text>
<text x="423.60" y="791.5" font-size="15.7" fill="#7f7f7f" textLength="17.46" lengthAdjust="spacingAndGlyphs">77</text>
<text x="423.60" y="814.2" font-size="15.7" fill="#7f7f7f" textLength="26.19" lengthAdjust="spacingAndGlyphs">395</text>
<text x="484.60" y="677.7" font-size="16.5" fill="#000" font-weight="bold" textLength="34.61" lengthAdjust="spacingAndGlyphs">2013</text>
<text x="484.60" y="700.5" font-size="15.7" fill="#000" textLength="34.92" lengthAdjust="spacingAndGlyphs">1563</text>
<text x="484.60" y="723.2" font-size="15.7" fill="#7f7f7f" textLength="17.46" lengthAdjust="spacingAndGlyphs">31</text>
<text x="484.60" y="746" font-size="15.7" fill="#7f7f7f" textLength="26.19" lengthAdjust="spacingAndGlyphs">552</text>
<text x="484.60" y="769.3" font-size="15.7" fill="#7f7f7f" textLength="17.46" lengthAdjust="spacingAndGlyphs">10</text>
<text x="484.60" y="791.5" font-size="15.7" fill="#7f7f7f" textLength="17.46" lengthAdjust="spacingAndGlyphs">81</text>
<text x="484.60" y="814.2" font-size="15.7" fill="#7f7f7f" textLength="26.19" lengthAdjust="spacingAndGlyphs">420</text>
<text x="545.60" y="677.7" font-size="16.5" fill="#000" font-weight="bold" textLength="34.61" lengthAdjust="spacingAndGlyphs">2014</text>
<text x="545.60" y="700.5" font-size="15.7" fill="#000" textLength="34.92" lengthAdjust="spacingAndGlyphs">1693</text>
<text x="545.60" y="723.2" font-size="15.7" fill="#7f7f7f" textLength="17.46" lengthAdjust="spacingAndGlyphs">33</text>
<text x="545.60" y="746" font-size="15.7" fill="#7f7f7f" textLength="26.19" lengthAdjust="spacingAndGlyphs">628</text>
<text x="545.60" y="769.3" font-size="15.7" fill="#7f7f7f" textLength="17.46" lengthAdjust="spacingAndGlyphs">10</text>
<text x="545.60" y="791.5" font-size="15.7" fill="#7f7f7f" textLength="17.46" lengthAdjust="spacingAndGlyphs">84</text>
<text x="545.60" y="814.2" font-size="15.7" fill="#7f7f7f" textLength="26.19" lengthAdjust="spacingAndGlyphs">441</text>
<text x="606.60" y="677.7" font-size="16.5" fill="#000" font-weight="bold" textLength="34.61" lengthAdjust="spacingAndGlyphs">2015</text>
<text x="606.60" y="700.5" font-size="15.7" fill="#000" textLength="34.92" lengthAdjust="spacingAndGlyphs">1846</text>
<text x="606.60" y="723.2" font-size="15.7" fill="#7f7f7f" textLength="17.46" lengthAdjust="spacingAndGlyphs">35</text>
<text x="606.60" y="746" font-size="15.7" fill="#7f7f7f" textLength="26.19" lengthAdjust="spacingAndGlyphs">717</text>
<text x="606.60" y="769.3" font-size="15.7" fill="#7f7f7f" textLength="17.46" lengthAdjust="spacingAndGlyphs">12</text>
<text x="606.60" y="791.5" font-size="15.7" fill="#7f7f7f" textLength="17.46" lengthAdjust="spacingAndGlyphs">88</text>
<text x="606.60" y="814.2" font-size="15.7" fill="#7f7f7f" textLength="26.19" lengthAdjust="spacingAndGlyphs">465</text>
<text x="667.60" y="677.7" font-size="16.5" fill="#000" font-weight="bold" textLength="34.61" lengthAdjust="spacingAndGlyphs">2016</text>
<text x="667.60" y="700.5" font-size="15.7" fill="#000" textLength="34.92" lengthAdjust="spacingAndGlyphs">2009</text>
<text x="667.60" y="723.2" font-size="15.7" fill="#7f7f7f" textLength="17.46" lengthAdjust="spacingAndGlyphs">38</text>
<text x="667.60" y="746" font-size="15.7" fill="#7f7f7f" textLength="26.19" lengthAdjust="spacingAndGlyphs">809</text>
<text x="667.60" y="769.3" font-size="15.7" fill="#7f7f7f" textLength="17.46" lengthAdjust="spacingAndGlyphs">13</text>
<text x="667.60" y="791.5" font-size="15.7" fill="#7f7f7f" textLength="17.46" lengthAdjust="spacingAndGlyphs">91</text>
<text x="667.60" y="814.2" font-size="15.7" fill="#7f7f7f" textLength="26.19" lengthAdjust="spacingAndGlyphs">489</text>
<text x="728.60" y="677.7" font-size="16.5" fill="#000" font-weight="bold" textLength="34.61" lengthAdjust="spacingAndGlyphs">2017</text>
<text x="728.60" y="700.5" font-size="15.7" fill="#000" textLength="34.92" lengthAdjust="spacingAndGlyphs">2182</text>
<text x="728.60" y="723.2" font-size="15.7" fill="#7f7f7f" textLength="17.46" lengthAdjust="spacingAndGlyphs">43</text>
<text x="728.60" y="746" font-size="15.7" fill="#7f7f7f" textLength="26.19" lengthAdjust="spacingAndGlyphs">915</text>
<text x="728.60" y="769.3" font-size="15.7" fill="#7f7f7f" textLength="17.46" lengthAdjust="spacingAndGlyphs">14</text>
<text x="728.60" y="791.5" font-size="15.7" fill="#7f7f7f" textLength="17.46" lengthAdjust="spacingAndGlyphs">99</text>
<text x="728.60" y="814.2" font-size="15.7" fill="#7f7f7f" textLength="26.19" lengthAdjust="spacingAndGlyphs">513</text>
<text x="789.60" y="677.7" font-size="16.5" fill="#000" font-weight="bold" textLength="34.61" lengthAdjust="spacingAndGlyphs">2018</text>
<text x="789.60" y="700.5" font-size="15.7" fill="#000" textLength="34.92" lengthAdjust="spacingAndGlyphs">2361</text>
<text x="789.60" y="723.2" font-size="15.7" fill="#7f7f7f" textLength="17.46" lengthAdjust="spacingAndGlyphs">46</text>
<text x="789.60" y="746" font-size="15.7" fill="#7f7f7f" textLength="34.92" lengthAdjust="spacingAndGlyphs">1024</text>
<text x="789.60" y="769.3" font-size="15.7" fill="#7f7f7f" textLength="17.46" lengthAdjust="spacingAndGlyphs">15</text>
<text x="789.60" y="791.5" font-size="15.7" fill="#7f7f7f" textLength="26.19" lengthAdjust="spacingAndGlyphs">103</text>
<text x="789.60" y="814.2" font-size="15.7" fill="#7f7f7f" textLength="26.19" lengthAdjust="spacingAndGlyphs">538</text>
<text x="850.60" y="677.7" font-size="16.5" fill="#000" font-weight="bold" textLength="34.61" lengthAdjust="spacingAndGlyphs">2019</text>
<text x="850.60" y="700.5" font-size="15.7" fill="#000" textLength="34.92" lengthAdjust="spacingAndGlyphs">2658</text>
<text x="850.60" y="723.2" font-size="15.7" fill="#7f7f7f" textLength="17.46" lengthAdjust="spacingAndGlyphs">48</text>
<text x="850.60" y="746" font-size="15.7" fill="#7f7f7f" textLength="32.59" lengthAdjust="spacingAndGlyphs">1119</text>
<text x="850.60" y="769.3" font-size="15.7" fill="#7f7f7f" textLength="17.46" lengthAdjust="spacingAndGlyphs">16</text>
<text x="850.60" y="791.5" font-size="15.7" fill="#7f7f7f" textLength="26.19" lengthAdjust="spacingAndGlyphs">106</text>
<text x="850.60" y="814.2" font-size="15.7" fill="#7f7f7f" textLength="26.19" lengthAdjust="spacingAndGlyphs">573</text>
<text x="933.10" y="652.7" font-size="16" fill="#777" textLength="85.25" lengthAdjust="spacingAndGlyphs">По данным</text>
<text x="933.10" y="674.3" font-size="16" fill="#777" textLength="290.33" lengthAdjust="spacingAndGlyphs">International Renewable Energy Agency</text>
<rect x="1238" y="185" width="17" height="637" fill="#e2e2e2" />
<rect x="1238" y="185" width="1" height="637" fill="#c8c8c8"/>
<rect x="1238.5" y="186.5" width="14" height="15" fill="#f1f1f1" stroke="#d0d0d0" stroke-width="1" />
<path d="M1241.5 197 h8 l-4 -4z" fill="#a8a8a8"/>
<rect x="1238.5" y="203.5" width="14" height="440" fill="#f1f1f1" stroke="#d0d0d0" stroke-width="1" />
<rect x="1243" y="415.5" width="6" height="1" fill="#c4c4c4"/>
<rect x="1243" y="417.9" width="6" height="1" fill="#c4c4c4"/>
<rect x="1243" y="420.3" width="6" height="1" fill="#c4c4c4"/>
<rect x="1243" y="422.7" width="6" height="1" fill="#c4c4c4"/>
<rect x="1243" y="425.1" width="6" height="1" fill="#c4c4c4"/>
<rect x="1243" y="427.5" width="6" height="1" fill="#c4c4c4"/>
<rect x="1238.5" y="807.5" width="14" height="15" fill="#f1f1f1" stroke="#d0d0d0" stroke-width="1" />
<path d="M1241.5 812 h8 l-4 4z" fill="#a8a8a8"/>
<rect x="49" y="824" width="1189" height="18" fill="#e2e2e2" />
<rect x="50.5" y="824.5" width="16" height="15" fill="#f1f1f1" stroke="#d0d0d0" stroke-width="1" />
<path d="M61.5 828 v8 l-4 -4z" fill="#a8a8a8"/>
<rect x="68.5" y="824.5" width="1001" height="15" fill="#f1f1f1" stroke="#d0d0d0" stroke-width="1" />
<rect x="561" y="829" width="1" height="6" fill="#b8b8b8"/>
<rect x="563" y="829" width="1" height="6" fill="#b8b8b8"/>
<rect x="565" y="829" width="1" height="6" fill="#b8b8b8"/>
<rect x="567" y="829" width="1" height="6" fill="#b8b8b8"/>
<rect x="569" y="829" width="1" height="6" fill="#b8b8b8"/>
<rect x="571" y="829" width="1" height="6" fill="#b8b8b8"/>
<rect x="573" y="829" width="1" height="6" fill="#b8b8b8"/>
<rect x="1221.5" y="824.5" width="15" height="15" fill="#f1f1f1" stroke="#d0d0d0" stroke-width="1" />
<path d="M1226.5 828 v8 l4 -4z" fill="#a8a8a8"/>
<rect x="0" y="842" width="1580" height="1" fill="#c8c8c8"/>
<path d="M31 852 v12 l-9 -6z" fill="#a0a0a0"/>
<path d="M52 852 v12 l9 -6z" fill="#222"/>
<rect x="85" y="843" width="1" height="27" fill="#d0d0d0"/>
<path d="M108 852 v13 M101.5 858.5 h13" stroke="#333" stroke-width="1.3"/>
<rect x="131" y="852.5" width="13" height="1" fill="#444"/>
<rect x="131" y="856.5" width="13" height="1" fill="#444"/>
<rect x="131" y="860.5" width="13" height="1" fill="#444"/>
<rect x="131" y="864.5" width="13" height="1" fill="#444"/>
<rect x="161" y="842" width="79" height="28" fill="#fff" />
<rect x="161" y="842" width="79" height="5" fill="#1f7a55" />
<text x="174.50" y="862" font-size="14" fill="#333" font-weight="bold" textLength="53.01" lengthAdjust="spacingAndGlyphs">Данные</text>
<rect x="240" y="843" width="1" height="27" fill="#d0d0d0"/>
<text x="256.00" y="862" font-size="14" fill="#9a9a9a" textLength="54.95" lengthAdjust="spacingAndGlyphs">Графики</text>
<rect x="326" y="843" width="1" height="27" fill="#d0d0d0"/>
<text x="347.00" y="862" font-size="14" fill="#9a9a9a" textLength="163.98" lengthAdjust="spacingAndGlyphs">Генерирующие мощности</text>
<rect x="531" y="843" width="1" height="27" fill="#d0d0d0"/>
<text x="550.00" y="862" font-size="14" fill="#9a9a9a" textLength="112.96" lengthAdjust="spacingAndGlyphs">Прирост по годам</text>
<rect x="681" y="843" width="1" height="27" fill="#d0d0d0"/>
<text x="704.00" y="862" font-size="14" fill="#9a9a9a" textLength="171.00" lengthAdjust="spacingAndGlyphs">Доли по технологиям в год</text>
<rect x="896" y="843" width="1" height="27" fill="#d0d0d0"/>
<text x="915.00" y="862" font-size="14" fill="#9a9a9a" textLength="128.04" lengthAdjust="spacingAndGlyphs">Генерация по годам</text>
<rect x="1061" y="843" width="1" height="27" fill="#d0d0d0"/>
<text x="1077.00" y="862" font-size="14" fill="#9a9a9a" textLength="75.96" lengthAdjust="spacingAndGlyphs">По районам</text>
<rect x="1153" y="843" width="1" height="27" fill="#d0d0d0"/>
<rect x="1378" y="858.5" width="14" height="1.3" fill="#333"/>
<text x="1404.00" y="863" font-size="13.5" fill="#444" font-weight="bold" textLength="94.00" lengthAdjust="spacingAndGlyphs">Масштаб 90%</text>
<path d="M1517 851 v14 M1510 858 h14" stroke="#333" stroke-width="1.3"/>
<rect x="1530" y="153" width="1" height="689" fill="#d0d0d0"/>
<g fill="none" stroke="#444" stroke-width="1.3"><circle cx="22.5" cy="190" r="6.3"/><path d="M27 194.5 l5 5"/></g>
<g fill="none" stroke="#444" stroke-width="1.1"><path d="M14.8 230.5 h18.5 v12.5 h-11 l-3.5 3.5 v-3.5 h-4z M18 234.5 h12 M18 237.5 h12 M18 240.5 h8"/></g>
<rect x="25" y="240" width="12" height="9" rx="2.5" fill="#ffd42a"/><path d="M27.5 243.3 h7 M27.5 245.8 h7" stroke="#333" stroke-width="1"/>
<g fill="none" stroke="#444" stroke-width="1.1"><path d="M14.5 288 v-10.5 h15 v2.5 M14.5 288 l1.5 -1.5"/><path d="M18.5 280.5 h15.5 v11 h-2.5 v2.5 l-2.5 -2.5 h-10.5z"/></g>
<circle cx="22.5" cy="286" r="0.9" fill="#444"/><circle cx="26.3" cy="286" r="0.9" fill="#444"/><circle cx="30" cy="286" r="0.9" fill="#444"/>
<text x="14.5" y="334" font-size="9.5" fill="#444" textLength="19" lengthAdjust="spacingAndGlyphs">ABC</text>
<g fill="none" stroke="#444" stroke-width="1.6"><path d="M22 337 l3 3 l7 -6"/></g>
<g fill="none" stroke="#444" stroke-width="1.1"><circle cx="24.3" cy="381.5" r="9"/><path d="M24.3 379.5 v6.5"/></g>
<circle cx="24.3" cy="377" r="0.9" fill="#444"/>
<text x="1275.30" y="175.8" font-size="13.7" fill="#333" font-weight="bold" textLength="55.73" lengthAdjust="spacingAndGlyphs">Заливка</text>
<rect x="1275.5" y="181.5" width="242" height="26.5" fill="#fff" stroke="#cfcfcf" stroke-width="1" rx="2" />
<text x="1279.60" y="200" font-size="13.7" fill="#333" textLength="76.37" lengthAdjust="spacingAndGlyphs">Без заливки</text>
<path d="M1503.8 193.4 l3.2 3.2 l3.2 -3.2" fill="none" stroke="#444" stroke-width="1.1"/>
<rect x="1275" y="218.5" width="243" height="1" fill="#cfcfcf"/>
<text x="1275.30" y="242.8" font-size="13.7" fill="#333" font-weight="bold" textLength="94.17" lengthAdjust="spacingAndGlyphs">Стиль границ</text>
<rect x="1275.5" y="259.5" width="115" height="25.5" fill="#fff" stroke="#cfcfcf" stroke-width="1" rx="2" />
<rect x="1288" y="271" width="75" height="1.1" fill="#222"/>
<path d="M1377.8 269.9 l3.2 3.2 l3.2 -3.2" fill="none" stroke="#444" stroke-width="1.1"/>
<text x="1424.80" y="276.2" font-size="13.7" fill="#444" textLength="29.70" lengthAdjust="spacingAndGlyphs">Цвет</text>
<rect x="1461.5" y="259.5" width="56" height="25.5" fill="#fff" stroke="#cfcfcf" stroke-width="1" rx="2" />
<rect x="1463" y="261" width="40" height="23" fill="#000" />
<path d="M1505.8 270.4 l3.2 3.2 l3.2 -3.2" fill="none" stroke="#444" stroke-width="1.1"/>
<text x="1275.30" y="308.5" font-size="13.7" fill="#444" textLength="226.57" lengthAdjust="spacingAndGlyphs">Выберите границы, к которым надо</text>
<text x="1275.30" y="327.2" font-size="13.7" fill="#444" textLength="184.52" lengthAdjust="spacingAndGlyphs">применить выбранный стиль</text>
<rect x="1280.5" y="349.5" width="14" height="14" stroke="#999" stroke-width="0.8" stroke-dasharray="1 1.3" fill="none"/><path d="M1287.5 349 v15 M1280 356.5 h15" stroke="#999" stroke-width="0.8" stroke-dasharray="1 1.3" fill="none"/>
<rect x="1280.5" y="349.5" width="14" height="14" stroke="#333" stroke-width="1.3" fill="none"/><path d="M1287.5 349 v15 M1280 356.5 h15" stroke="#333" stroke-width="1.3" fill="none"/>
<rect x="1310.5" y="349.5" width="14" height="14" stroke="#999" stroke-width="0.8" stroke-dasharray="1 1.3" fill="none"/><path d="M1317.5 349 v15 M1310 356.5 h15" stroke="#999" stroke-width="0.8" stroke-dasharray="1 1.3" fill="none"/>
<rect x="1341.5" y="349.5" width="14" height="14" stroke="#999" stroke-width="0.8" stroke-dasharray="1 1.3" fill="none"/><path d="M1348.5 349 v15 M1341 356.5 h15" stroke="#999" stroke-width="0.8" stroke-dasharray="1 1.3" fill="none"/>
<path d="M1348.5 349 v15 M1341 356.5 h15" stroke="#333" stroke-width="1.3" fill="none"/>
<rect x="1371.5" y="349.5" width="14" height="14" stroke="#999" stroke-width="0.8" stroke-dasharray="1 1.3" fill="none"/><path d="M1378.5 349 v15 M1371 356.5 h15" stroke="#999" stroke-width="0.8" stroke-dasharray="1 1.3" fill="none"/>
<rect x="1371.5" y="349.5" width="14" height="14" stroke="#333" stroke-width="1.3" fill="none"/>
<rect x="1401.5" y="349.5" width="14" height="14" stroke="#999" stroke-width="0.8" stroke-dasharray="1 1.3" fill="none"/><path d="M1408.5 349 v15 M1401 356.5 h15" stroke="#999" stroke-width="0.8" stroke-dasharray="1 1.3" fill="none"/>
<path d="M1401 364 L1416 349" stroke="#333" stroke-width="1.3" fill="none"/>
<rect x="1431.5" y="349.5" width="14" height="14" stroke="#999" stroke-width="0.8" stroke-dasharray="1 1.3" fill="none"/><path d="M1438.5 349 v15 M1431 356.5 h15" stroke="#999" stroke-width="0.8" stroke-dasharray="1 1.3" fill="none"/>
<path d="M1431 349 L1446 364" stroke="#333" stroke-width="1.3" fill="none"/>
<rect x="1280.5" y="385.5" width="14" height="14" stroke="#999" stroke-width="0.8" stroke-dasharray="1 1.3" fill="none"/><path d="M1287.5 385 v15 M1280 392.5 h15" stroke="#999" stroke-width="0.8" stroke-dasharray="1 1.3" fill="none"/>
<path d="M1280.5 385 v15" stroke="#333" stroke-width="1.3" fill="none"/>
<rect x="1310.5" y="385.5" width="14" height="14" stroke="#999" stroke-width="0.8" stroke-dasharray="1 1.3" fill="none"/><path d="M1317.5 385 v15 M1310 392.5 h15" stroke="#999" stroke-width="0.8" stroke-dasharray="1 1.3" fill="none"/>
<path d="M1317.5 385 v15" stroke="#333" stroke-width="1.3" fill="none"/>
<rect x="1341.5" y="385.5" width="14" height="14" stroke="#999" stroke-width="0.8" stroke-dasharray="1 1.3" fill="none"/><path d="M1348.5 385 v15 M1341 392.5 h15" stroke="#999" stroke-width="0.8" stroke-dasharray="1 1.3" fill="none"/>
<path d="M1355.5 385 v15" stroke="#333" stroke-width="1.3" fill="none"/>
<rect x="1371.5" y="385.5" width="14" height="14" stroke="#999" stroke-width="0.8" stroke-dasharray="1 1.3" fill="none"/><path d="M1378.5 385 v15 M1371 392.5 h15" stroke="#999" stroke-width="0.8" stroke-dasharray="1 1.3" fill="none"/>
<path d="M1371 385.5 h15" stroke="#333" stroke-width="1.3" fill="none"/>
<rect x="1401.5" y="385.5" width="14" height="14" stroke="#999" stroke-width="0.8" stroke-dasharray="1 1.3" fill="none"/><path d="M1408.5 385 v15 M1401 392.5 h15" stroke="#999" stroke-width="0.8" stroke-dasharray="1 1.3" fill="none"/>
<path d="M1401 392.5 h15" stroke="#333" stroke-width="1.3" fill="none"/>
<rect x="1431.5" y="385.5" width="14" height="14" stroke="#999" stroke-width="0.8" stroke-dasharray="1 1.3" fill="none"/><path d="M1438.5 385 v15 M1431 392.5 h15" stroke="#999" stroke-width="0.8" stroke-dasharray="1 1.3" fill="none"/>
<path d="M1431 399.5 h15" stroke="#333" stroke-width="1.3" fill="none"/>
<rect x="1275" y="416" width="243" height="1" fill="#cfcfcf"/>
<text x="1275.40" y="439.6" font-size="13.7" fill="#333" font-weight="bold" textLength="47.55" lengthAdjust="spacingAndGlyphs">Отступ</text>
<rect x="1275.5" y="447.5" width="74" height="24.5" fill="#fff" stroke="#cfcfcf" stroke-width="1" rx="2" />
<text x="1318.00" y="463.5" font-size="13.7" fill="#333" textLength="6.62" lengthAdjust="spacingAndGlyphs">0</text>
<path d="M1335 455 l3 -3 l3 3 M1335 465 l3 3 l3 -3" fill="none" stroke="#444" stroke-width="1"/>
<text x="1275.70" y="505.8" font-size="13.7" fill="#333" font-weight="bold" textLength="130.26" lengthAdjust="spacingAndGlyphs">Ориентация текста</text>
<text x="1275.40" y="540.2" font-size="13.7" fill="#444" textLength="27.09" lengthAdjust="spacingAndGlyphs">Угол</text>
<rect x="1313.5" y="522.5" width="73.5" height="26.5" fill="#fff" stroke="#cfcfcf" stroke-width="1" rx="2" />
<text x="1346.70" y="540" font-size="13.7" fill="#333" textLength="16.40" lengthAdjust="spacingAndGlyphs">0 °</text>
<path d="M1374 530 l3 -3 l3 3 M1374 540 l3 3 l3 -3" fill="none" stroke="#444" stroke-width="1"/>
<text x="1275.70" y="582.4" font-size="13.7" fill="#333" font-weight="bold" textLength="91.67" lengthAdjust="spacingAndGlyphs">Отображение</text>
<rect x="1275.5" y="598.5" width="16" height="16.5" fill="#fff" stroke="#cfcfcf" stroke-width="1" rx="2" />
<text x="1303.00" y="611" font-size="13.7" fill="#444" textLength="97.92" lengthAdjust="spacingAndGlyphs">Перенос текста</text>
<rect x="1275.5" y="627.5" width="16" height="16.5" fill="#fff" stroke="#cfcfcf" stroke-width="1" rx="2" />
<text x="1303.00" y="639.8" font-size="13.7" fill="#444" textLength="130.20" lengthAdjust="spacingAndGlyphs">Автоподбор ширины</text>
<rect x="1275" y="656" width="243" height="1" fill="#cfcfcf"/>
<g fill="none" stroke="#444" stroke-width="1.0"><rect x="1279.5" y="671.5" width="14" height="14"/><path d="M1279.5 675.5 h14 M1279.5 679.5 h7"/></g>
<rect x="1280" y="680" width="6.5" height="6" fill="#777"/>
<g fill="none" stroke="#444" stroke-width="1.0"><rect x="1286.5" y="679.5" width="9.5" height="9" fill="#f1f1f1"/><path d="M1289 681.5 l3.5 2.5 l-3.5 2.5"/></g>
<text x="1305.00" y="683.5" font-size="13.7" fill="#444" textLength="174.38" lengthAdjust="spacingAndGlyphs">Условное форматирование</text>
<path d="M1487.5 678.0 l3 3 l3 -3" fill="none" stroke="#444" stroke-width="1.1"/>
<g fill="none" stroke="#fff" stroke-width="1.1"><rect x="1546.5" y="184.5" width="18" height="14"/><path d="M1546.5 187.5 h18 M1546.5 195.5 h18 M1549.5 184.5 v14 M1561.5 184.5 v14"/></g>
<rect x="1550" y="188" width="11" height="7" fill="#c5cace"/>
<g fill="none" stroke="#a0a0a0" stroke-width="1.1"><rect x="1546.5" y="232.5" width="18" height="12"/><path d="M1546.5 236.5 h18 M1546.5 240.5 h18 M1552.5 232.5 v12 M1558.5 232.5 v12"/></g>
<g fill="none" stroke="#a0a0a0" stroke-width="1.1"><path d="M1547.5 286 v-8 h8 v3"/><circle cx="1558" cy="288" r="6"/></g>
<g fill="none" stroke="#a0a0a0" stroke-width="1.1"><rect x="1547.5" y="325.5" width="16.5" height="16"/><path d="M1547.5 338 l5 -5 l3.5 3.5 l3 -3 l5 4.5"/><circle cx="1551.5" cy="329.5" r="1.4"/></g>
<g fill="none" stroke="#a0a0a0" stroke-width="1.1"><rect x="1547.5" y="384.5" width="4" height="4.5"/><rect x="1554" y="378.5" width="4" height="10.5"/><rect x="1560.5" y="372.5" width="4" height="16.5"/></g>
<path d="M1556 421.5 h5 M1558.5 421.5 v15 M1556 421.5 v15" stroke="#a0a0a0" stroke-width="1.2" fill="none"/><path d="M1556 421.5 q-5.5 0 -5.5 4 q0 4 5.5 4z" fill="#a0a0a0"/>
<text x="1549" y="479.5" font-size="14" fill="#a0a0a0" textLength="13" lengthAdjust="spacingAndGlyphs">Ta</text><path d="M1549.5 487 q6 -6 12 0" fill="none" stroke="#a0a0a0" stroke-width="1.1"/>
<g fill="none" stroke="#a0a0a0" stroke-width="1.0"><rect x="1547.5" y="515.5" width="4" height="4"/><rect x="1547.5" y="523.5" width="4" height="8.5"/><rect x="1555.5" y="515.5" width="9" height="4"/><path d="M1563 523 q0 7 -7 7 M1558 528 l-2 2 l2 2 M1561 525 l2 -2 l2 2"/></g>
<g fill="none" stroke="#a0a0a0" stroke-width="1.1"><path d="M1561 579 v-16.5 h-13.5 v20.5 h8"/><path d="M1550 566 h9 M1550 570 h9 M1550 574 h9"/></g>
<path d="M1555 574.5 h11 l-4 4.5 v4.5 l-3 -2 v-2.5z" fill="#a0a0a0"/>
<path fill-rule="evenodd" fill="#c4e4ed" d="M954.5 714.7 a20.5 20.8 0 1 0 0.01 0z M955.5 719 a17.8 17.8 0 1 1 -0.01 0z"/>
<path fill-rule="evenodd" fill="#c4e4ed" d="M999.3 714.7 a20.6 20.8 0 1 0 0.01 0z M998.8 719 a17.8 17.5 0 1 1 -0.01 0z"/>
<path d="M967 715 q8 6 10 10 L970 721z" fill="#fff"/>
<path d="M970.5 743 q8 -14 16 -20 l3 2 q-7 6 -14 22z" fill="#c4e4ed"/>
<path d="M966 749 q4 -3 7 -7 l3 3 q-4 6 -9 8z" fill="#c4e4ed"/>
<g fill="#c4e4ed"><path d="M944 724 q4 -5 12 -4 q3 2 1 5 q-3 1 -4 4 q-2 3 -1 5 q-5 -1 -6 -4 q-1 -4 -2 -6z"/><path d="M954 735 q5 -1 8 3 q0 4 -3 6 q-1 4 -3 7 q-2 -3 -2 -7 q-1 -5 0 -9z"/><path d="M985 725 q10 -5 28 -4 q4 4 2 9 q-3 3 -4 7 q-3 -2 -6 1 q-2 -3 -5 -3 q-4 -1 -6 2 q-3 -2 -6 0 q-3 -4 -3 -12z"/><path d="M985 733 q6 -1 10 2 q2 3 1 6 q-2 3 -3 7 q-3 -2 -4 -6 q-3 -4 -4 -9z"/><path d="M1009 742 q4 -2 7 0 q0 3 -3 5 q-3 -1 -4 -5z"/></g>
<text x="1032.00" y="754.7" font-size="52" fill="#e0e0e0" textLength="148.62" lengthAdjust="spacingAndGlyphs">IRENA</text>
<text x="934.00" y="775" font-size="13" fill="#bfe0ec" textLength="246.56" lengthAdjust="spacingAndGlyphs">International Renewable Energy Agency</text>
</svg></body></html>
